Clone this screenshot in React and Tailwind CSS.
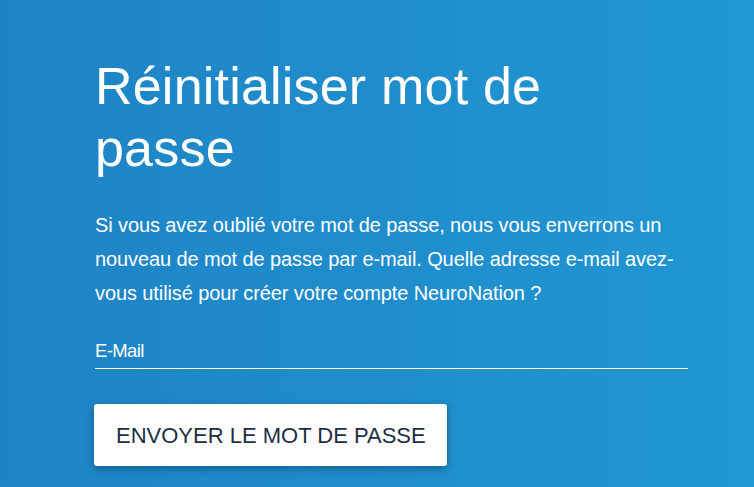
export default function App() {
  return (
    <div
      className="min-h-[487px] w-full bg-gradient-to-r from-[#1e83c5] to-[#2197d3] text-white"
      style={{ fontFamily: '"Liberation Sans", Arial, sans-serif' }}
    >
      <div className="pl-[95px] pt-[55px] w-[688px]">
        <h1 className="text-[52px] leading-[62px] tracking-[0.2px] font-normal">
          Réinitialiser mot de passe
        </h1>
        <p className="mt-[29px] text-[20px] leading-[34px] tracking-[-0.1px]">
          Si vous avez oublié votre mot de passe, nous vous enverrons un nouveau de mot de passe par e-mail. Quelle adresse e-mail avez-vous utilisé pour créer votre compte NeuroNation ?
        </p>
        <div className="mt-[29px] border-b border-white pb-[5px]">
          <input
            type="email"
            placeholder="E-Mail"
            className="block w-full bg-transparent text-[18.5px] leading-[24px] tracking-[-0.6px] text-white placeholder:text-white outline-none"
          />
        </div>
        <button className="-ml-px mt-[35px] h-[62px] pl-[22px] pr-[21px] bg-white rounded-[3px] text-[#1c2e44] text-[22px] uppercase shadow-[0_3px_8px_rgba(0,0,0,0.3)]">
          Envoyer le mot de passe
        </button>
      </div>
    </div>
  );
}
